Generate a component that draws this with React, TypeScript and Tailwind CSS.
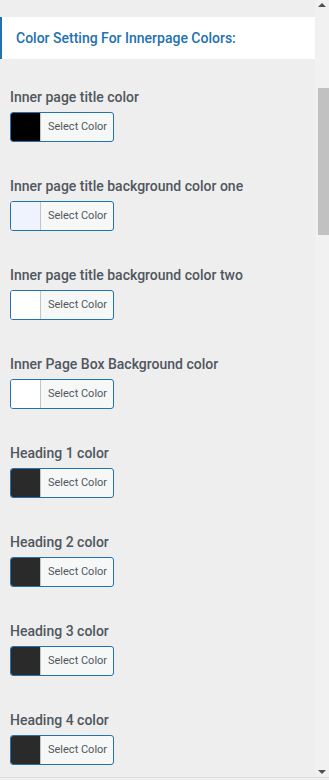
const items = [
  { label: "Inner page title color", color: "#000000" },
  { label: "Inner page title background color one", color: "#eef3fd" },
  { label: "Inner page title background color two", color: "#ffffff" },
  { label: "Inner Page Box Background color", color: "#ffffff" },
  { label: "Heading 1 color", color: "#2a2a2a" },
  { label: "Heading 2 color", color: "#2a2a2a" },
  { label: "Heading 3 color", color: "#2a2a2a" },
  { label: "Heading 4 color", color: "#2a2a2a" },
];

function ColorPicker({ color }: { color: string }) {
  return (
    <button
      type="button"
      className="flex h-[30px] w-[104px] overflow-hidden rounded-[3px] border border-[#2271b1] bg-[#f6f7f7] text-left"
    >
      <span className="h-full w-[30px] border-r border-[#c3c4c7]" style={{ backgroundColor: color }} />
      <span className="flex flex-1 items-center pl-[7px] text-[11px] text-[#50575e]">Select Color</span>
    </button>
  );
}

export default function App() {
  return (
    <div className="flex h-[780px] w-[329px] flex-col overflow-hidden bg-[#eeeeee] font-['Roboto',sans-serif]">
      <div className="flex min-h-0 flex-1">
        <div className="w-[315px] overflow-hidden pt-[17px]">
          <div className="flex h-[42px] items-center border-l-2 border-[#2271b1] bg-white pl-[14px]">
            <h3 className="text-[14px] font-medium text-[#2271b1]">Color Setting For Innerpage Colors:</h3>
          </div>
          <div className="flex flex-col gap-[36px] px-[10px] pt-[30px]">
            {items.map((item) => (
              <div key={item.label} className="flex flex-col gap-[6px]">
                <label className="text-[14px] font-medium leading-[17px] text-[#50575e]">{item.label}</label>
                <ColorPicker color={item.color} />
              </div>
            ))}
          </div>
        </div>
        {/* scrollbar */}
        <div className="flex w-[14px] flex-col items-center bg-[#f1f1f1]">
          <div className="mt-[3px] h-0 w-0 border-x-[4px] border-b-[4px] border-x-transparent border-b-[#505050]" />
          <div className="ml-[2px] mt-[81px] h-[147px] w-[11px] bg-[#c1c1c1]" />
          <div className="flex-1" />
          <div className="mb-[3px] h-0 w-0 border-x-[4px] border-t-[4px] border-x-transparent border-t-[#505050]" />
        </div>
      </div>
      <div className="h-[3px] border-t border-[#dcdcde] bg-[#f0f0f0]" />
    </div>
  );
}
